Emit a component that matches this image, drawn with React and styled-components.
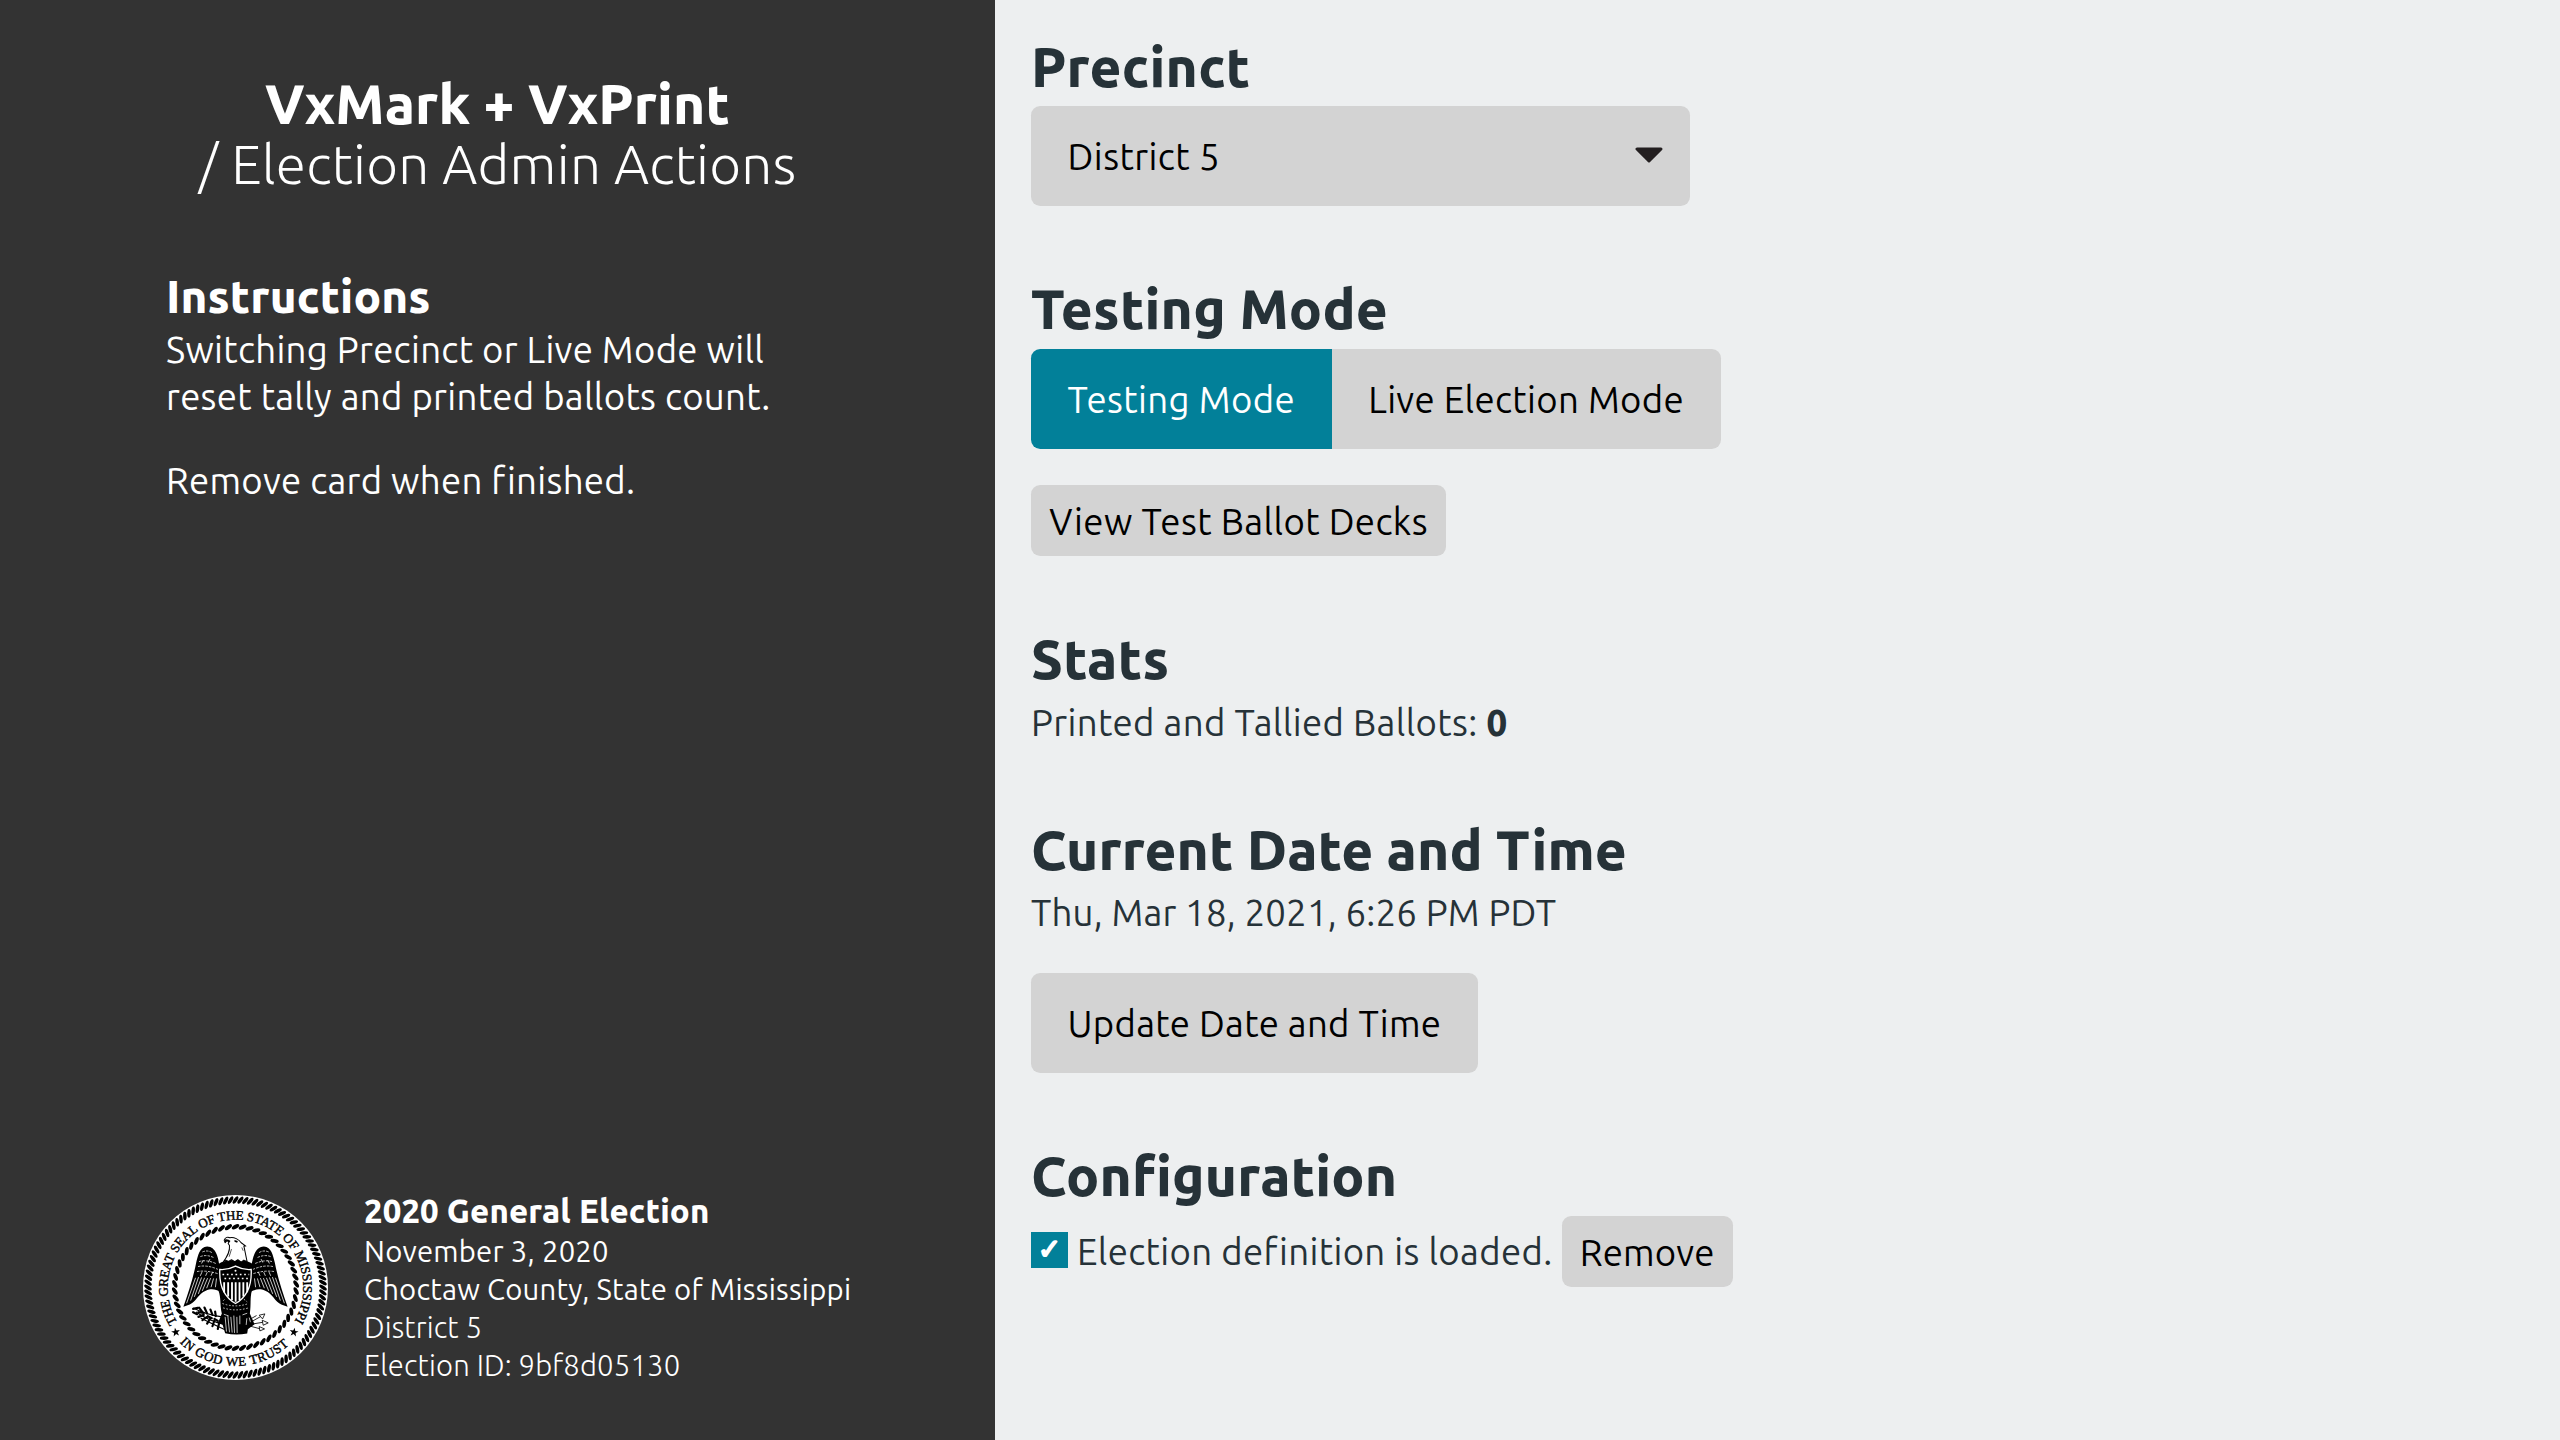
import React from 'react';
import styled, { createGlobalStyle } from 'styled-components';

const GlobalStyle = createGlobalStyle`
  *, *::before, *::after { box-sizing: border-box; }
  html { font-size: 36.571px; }
  body {
    margin: 0;
    background: #edeff0;
    color: #263238;
    font-family: Ubuntu, "Noto Sans", "Open Sans", sans-serif;
    font-size: 1rem;
    line-height: 1.3;
  }
  h1, h2, p { margin: 0; }
`;

const Screen = styled.div`
  display: flex;
  width: 100vw;
  height: 100vh;
  overflow: hidden;
`;

const Sidebar = styled.aside`
  display: flex;
  flex-direction: column;
  flex: 0 0 995px;
  padding-top: 74px;
  background: #333333;
  color: #ffffff;
`;

const Title = styled.h1`
  font-size: 1.5rem;
  line-height: 1.1;
  font-weight: 800;
  letter-spacing: 0.0026em;
  text-align: center;
`;

const TitleSuffix = styled.span`
  display: block;
  font-weight: 300;
  letter-spacing: 0.0048em;
`;

const Prose = styled.section`
  display: flex;
  flex-direction: column;
  gap: 1rem;
  padding: 76px 165px 0 166px;
  letter-spacing: 0.0085em;
`;

const Subheading = styled.h2`
  margin-bottom: -32px;
  font-size: 1.25rem;
  line-height: 1.1;
  font-weight: 800;
  letter-spacing: 0.0025em;
`;

const Footer = styled.footer`
  display: flex;
  align-items: center;
  gap: 36px;
  margin-top: auto;
  padding: 0 0 55px 143px;
`;

const Seal = styled.svg`
  flex: none;
  width: 185px;
  height: 185px;
`;

const ElectionInfo = styled.div`
  display: flex;
  flex-direction: column;
  font-size: 0.8rem;
`;

const ElectionName = styled.strong`
  font-size: 0.9rem;
  font-weight: 800;
  letter-spacing: 0.0042em;
`;

const InfoLine = styled.span`
  font-weight: ${(p) => (p.$light ? 300 : 400)};
  letter-spacing: ${(p) => (p.$light ? 0.005 : 0.0083)}em;
`;

const Main = styled.main`
  display: flex;
  flex-direction: column;
  flex: 1;
  gap: 2rem;
  padding: 36.6px 36px;
`;

const Section = styled.section`
  display: flex;
  flex-direction: column;
  align-items: flex-start;
`;

const Heading = styled.h1`
  margin-bottom: 0.25rem;
  font-size: 1.5rem;
  line-height: 1.1;
  font-weight: 800;
  letter-spacing: ${(p) => p.$track || 0.0045}em;
`;

const Text = styled.p`
  letter-spacing: ${(p) => p.$track || 0.0092}em;
`;

const Count = styled.strong`
  font-weight: 800;
`;

const Button = styled.button`
  height: ${(p) => (p.$small ? '71px' : '100px')};
  margin-top: ${(p) => (p.$spaced ? '1rem' : '0')};
  padding: 2px ${(p) => (p.$small ? '0.5rem' : '1rem')} 0;
  border: 0;
  border-radius: 0.25rem;
  background: ${(p) => (p.$primary ? '#028099' : '#d3d3d3')};
  color: ${(p) => (p.$primary ? '#ffffff' : '#000000')};
  font: inherit;
  letter-spacing: ${(p) => p.$track || 0.0105}em;
  white-space: nowrap;
`;

const SelectButton = styled(Button)`
  display: flex;
  align-items: center;
  justify-content: space-between;
  width: 659px;
  padding: 1px 27px 0 1rem;
`;

const Caret = styled.svg`
  width: 28px;
  height: 16px;
  margin-bottom: 3px;
`;

const Segmented = styled.div`
  display: flex;

  & > :first-child { border-radius: 0.25rem 0 0 0.25rem; }
  & > :last-child { border-radius: 0 0.25rem 0.25rem 0; }
`;

const StatusRow = styled.div`
  display: flex;
  align-items: center;
  gap: 9px;
`;

const CheckBox = styled.span`
  display: flex;
  align-items: center;
  justify-content: center;
  width: 37px;
  height: 36px;
  margin-bottom: 3px;
  background: #028099;
  color: #ffffff;
  font-family: "DejaVu Sans", sans-serif;
  font-size: 28px;
  line-height: 1;
  -webkit-text-stroke: 1.8px #ffffff;
`;

const range = (n) => Array.from({ length: n }, (_, i) => i);

const Rope = ({ radius, count, rx, ry, tilt }) => (
  <g transform="translate(315 320)">
    {range(count).map((i) => (
      <ellipse
        key={i}
        rx={rx}
        ry={ry}
        transform={`rotate(${(i * 360) / count}) translate(0 ${-radius}) rotate(${tilt})`}
      />
    ))}
  </g>
);

const Star = ({ x, y, angle }) => (
  <path
    transform={`translate(${x} ${y}) rotate(${angle})`}
    d="M0 -14 L3.3 -4.5 L13.3 -4.3 L5.3 1.7 L8.2 11.3 L0 5.6 L-8.2 11.3 L-5.3 1.7 L-13.3 -4.3 L-3.3 -4.5 Z"
  />
);

const Wing = () => (
  <g>
    <path d="M268 262 C264 232 258 198 230 197 C207 199 203 222 197 247 C189 288 174 336 159 378 L178 371 C196 364 204 339 226 330 C243 322 256 326 270 333 Z" />
    <g stroke="#fff" strokeWidth="2.3" fill="none" strokeLinecap="round">
      <path d="M195 292 L169 366 M204 290 L181 358 M213 291 L192 347 M222 292 L204 338 M231 293 L216 329 M240 293 L229 321 M249 294 L242 318 M258 294 L255 318" />
      <path strokeDasharray="5 6" d="M217 213 Q232 207 245 216 M211 227 Q230 220 253 232 M207 242 Q230 236 258 249 M204 257 Q230 252 261 265 M201 272 Q230 268 263 279" />
      <path d="M210 284 l4 -9 M226 284 l4 -9 M242 284 l4 -9 M214 247 l4 -8 M234 244 l4 -8" />
    </g>
  </g>
);

const StateSeal = () => (
  <Seal viewBox="38 43 554 554" role="img" aria-label="State seal">
    <defs>
      <path id="seal-top" d="M141 424.6 A203 203 0 1 1 489.9 423" />
      <path id="seal-bottom" d="M147.4 484.7 A235 235 0 0 0 476.8 490.5" />
    </defs>
    <circle cx="315" cy="320" r="277" fill="#fff" />
    <Rope radius={262} count={112} rx={13} ry={5.3} tilt={-56} />
    <Rope radius={182} count={54} rx={12.5} ry={5.8} tilt={-30} />
    <g fontFamily='"Liberation Serif", serif' fontSize="39" fill="#000" stroke="#000" strokeWidth="1.2">
      <text textLength="853">
        <textPath href="#seal-top" textLength="853">THE GREAT SEAL OF THE STATE OF MISSISSIPPI</textPath>
      </text>
      <text textLength="363">
        <textPath href="#seal-bottom" textLength="363">IN GOD WE TRUST</textPath>
      </text>
    </g>
    <Star x={136} y={454} angle={-10} />
    <Star x={490} y={454} angle={10} />

    <Wing />
    <g transform="translate(630 0) scale(-1 1)">
      <Wing />
    </g>

    <path d="M264 250 C280 236 345 232 366 250 L364 330 C358 350 362 372 358 398 L372 430 L352 445 L350 458 Q315 464 284 457 L276 430 L262 428 L274 398 C268 372 272 350 264 330 Z" />
    <path
      d="M281 178 C284 170 292 167 298 171 C310 168 326 176 332 186 L346 196 L340 196 C344 212 346 228 350 243 L340 238 L332 244 L322 237 L313 243 L303 237 L294 242 L286 238 L277 245 C290 228 299 214 297 194 L293 188 L296 182 L290 180 L284 186 Z"
      fill="#fff"
      stroke="#000"
      strokeWidth="3"
      strokeLinejoin="round"
    />
    <path d="M283 176 Q294 174 300 181 L296 185 L289 180 L284 186 Z M312 178 l10 3 -2 5 -8 -3 Z" />
    <path d="M303 205 L296 228 M334 200 l4 10" stroke="#000" strokeWidth="2" />

    <path
      d="M268 266 Q292 268 315 256 Q338 268 362 266 C364 310 354 346 315 368 C276 346 266 310 268 266 Z"
      stroke="#fff"
      strokeWidth="4"
    />
    <g stroke="#fff" strokeWidth="5.5">
      <path d="M281 304 V334 M293 304 V347 M304.5 304 V358 M315.5 304 V363 M327 304 V358 M338.5 304 V347 M350 304 V334" />
    </g>
    <g stroke="#fff" strokeWidth="4.5" strokeDasharray="5 8">
      <path d="M276 281 H356 M282 293 H352" />
    </g>
    <circle cx="315" cy="270" r="3" fill="#fff" />

    <g stroke="#fff" strokeWidth="2.2" fill="none">
      <path strokeDasharray="5 5" d="M276 368 Q315 382 354 368 M278 381 Q315 393 354 381 M340 355 l10 8 M282 356 l-6 6" />
      <path d="M284 408 L288 452 M292 404 L297 454 M301 408 L305 455 M310 404 L312 456 M319 408 L320 456 M328 404 V430 M280 400 l14 5 M336 402 l14 -5 M356 410 l4 14 M349 412 l-2 20" />
    </g>

    <g stroke="#000" fill="none" strokeWidth="3.5" strokeLinecap="round">
      <path d="M190 382 Q228 402 276 408 M198 394 Q232 418 278 430 M212 412 Q244 428 282 446" />
      <path
        strokeWidth="6.5"
        d="M188 384 l14 -3 M200 400 l-12 -6 M206 380 l10 14 M222 380 l8 18 M240 386 l6 16 M254 392 l2 14 M204 408 l16 -6 M216 418 l14 -10 M230 428 l10 -16 M246 436 l6 -18 M262 444 l4 -18 M204 394 l16 2 M232 406 l12 6 M252 414 l10 6"
      />
    </g>
    <g stroke="#000" strokeWidth="2.5" fill="#fff" strokeLinejoin="round">
      <path d="M360 424 L392 406 M362 430 L398 424 M360 436 L390 444" />
      <path d="M386 403 L403 399 L396 414 Z M395 418 L413 426 L398 433 Z M386 437 L402 444 L388 450 Z M364 412 L378 404" />
    </g>
  </Seal>
);

export default function App() {
  return (
    <>
      <GlobalStyle />
      <Screen>
        <Sidebar>
          <Title>
            VxMark + VxPrint
            <TitleSuffix>/ Election Admin Actions</TitleSuffix>
          </Title>
          <Prose>
            <Subheading>Instructions</Subheading>
            <p>Switching Precinct or Live Mode will reset tally and printed ballots count.</p>
            <p>Remove card when finished.</p>
          </Prose>
          <Footer>
            <StateSeal />
            <ElectionInfo>
              <ElectionName>2020 General Election</ElectionName>
              <InfoLine>November 3, 2020</InfoLine>
              <InfoLine>Choctaw County, State of Mississippi</InfoLine>
              <InfoLine $light>District 5</InfoLine>
              <InfoLine $light>Election ID: 9bf8d05130</InfoLine>
            </ElectionInfo>
          </Footer>
        </Sidebar>
        <Main>
          <Section>
            <Heading $track={0.005}>Precinct</Heading>
            <SelectButton $track={0.012}>
              District 5
              <Caret viewBox="0 0 28 16" aria-hidden="true">
                <path
                  d="M2 2 H26 L14 14 Z"
                  fill="#231f20"
                  stroke="#231f20"
                  strokeWidth="3"
                  strokeLinejoin="round"
                />
              </Caret>
            </SelectButton>
          </Section>
          <Section>
            <Heading>Testing Mode</Heading>
            <Segmented>
              <Button $primary>Testing Mode</Button>
              <Button $track={0.0095}>Live Election Mode</Button>
            </Segmented>
            <Button $small $spaced $track={0.0105}>View Test Ballot Decks</Button>
          </Section>
          <Section>
            <Heading $track={0.0075}>Stats</Heading>
            <Text $track={0.0098}>
              Printed and Tallied Ballots: <Count>0</Count>
            </Text>
          </Section>
          <Section>
            <Heading $track={0.0024}>Current Date and Time</Heading>
            <Text $track={0.0055}>Thu, Mar 18, 2021, 6:26 PM PDT</Text>
            <Button $spaced $track={0.0078}>Update Date and Time</Button>
          </Section>
          <Section>
            <Heading $track={0.0035}>Configuration</Heading>
            <StatusRow>
              <CheckBox>✓</CheckBox>
              <Text as="span">Election definition is loaded.</Text>
              <Button $small $track={0.005}>Remove</Button>
            </StatusRow>
          </Section>
        </Main>
      </Screen>
    </>
  );
}
